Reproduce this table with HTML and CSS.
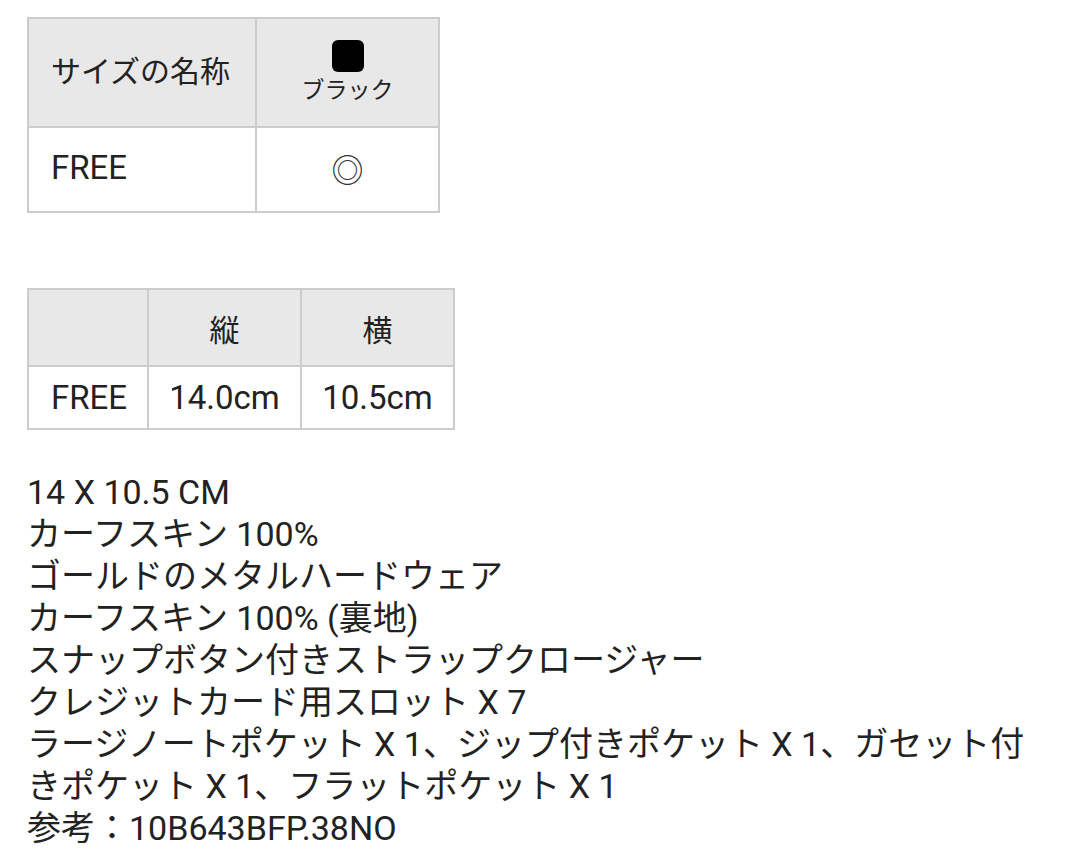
FILE: index.html
```html
<!DOCTYPE html>
<html lang="ja">
<head>
    <meta charset="UTF-8">
    <meta name="viewport" content="width=device-width, initial-scale=1.0">
    <title>サイズ・仕様</title>
    <link rel="stylesheet" href="styles.css">
</head>
<body>

<div class="product">
    <!-- 在庫表 -->
    <table class="spec stock">
        <tr class="head">
            <th class="name">サイズの名称</th>
            <th class="color">
                <span class="swatch"></span>
                <span class="color-label">ブラック</span>
            </th>
        </tr>
        <tr>
            <td class="name">FREE</td>
            <td class="mark">◎</td>
        </tr>
    </table>

    <!-- サイズ表 -->
    <table class="spec sizes">
        <tr class="head">
            <th class="name"></th>
            <th>縦</th>
            <th>横</th>
        </tr>
        <tr>
            <td class="name">FREE</td>
            <td>14.0cm</td>
            <td>10.5cm</td>
        </tr>
    </table>

    <div class="details">
        14 X 10.5 CM<br>
        カーフスキン 100%<br>
        ゴールドのメタルハードウェア<br>
        カーフスキン 100% (裏地)<br>
        スナップボタン付きストラップクロージャー<br>
        クレジットカード用スロット X 7<br>
        ラージノートポケット X 1、ジップ付きポケット X 1、ガセット付きポケット X 1、フラットポケット X 1<br>
        参考：10B643BFP.38NO
    </div>
</div>

</body>
</html>
```

FILE: styles.css
```css
body {
    margin: 0;
    font-family: Roboto, "Noto Sans CJK JP", sans-serif;
    color: #222;
    background-color: #fff;
}
.product {
    padding: 17px 27px 0 27px;
    font-size: 33px;
}
.spec {
    border-collapse: collapse;
    border: 2px solid #ccc;
}
.spec th, .spec td {
    border: 2px solid #ccc;
    padding: 0;
    text-align: center;
    font-weight: normal;
}
.spec .head th {
    background-color: #e8e8e8;
    font-size: 30px;
}
.spec .name {
    text-align: left;
    padding-left: 22px;
}
.stock {
    width: 413px;
}
.stock .head th {
    height: 107px;
}
.stock .head th.name {
    width: 204px;
    height: 99px;
    padding-bottom: 8px;
}
.stock td {
    height: 79px;
    padding-bottom: 4px;
}
.swatch {
    display: block;
    width: 32px;
    height: 32px;
    margin: 0 auto 4px;
    border-radius: 6px;
    background-color: #000;
}
.color-label {
    display: block;
    font-size: 23px;
    line-height: 30px;
}
.mark {
    font-size: 32px;
    color: #333;
}
.sizes {
    margin-top: 75px;
    width: 428px;
}
.sizes th.name {
    width: 96px;
}
.sizes .head th {
    height: 75px;
}
.sizes td {
    height: 61px;
}
.details {
    margin-top: 41px;
    font-size: 34px;
    line-height: 42px;
    width: 1020px;
}
```
